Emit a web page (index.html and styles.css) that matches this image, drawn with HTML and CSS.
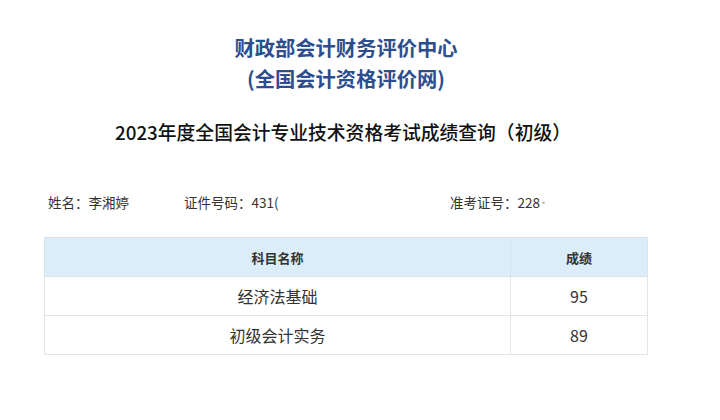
FILE: index.html
```html
<!DOCTYPE html>
<html lang="zh-CN">
<head>
<meta charset="utf-8">
<title>成绩查询</title>
<link rel="stylesheet" href="styles.css">
</head>
<body>
<div class="page">
  <div class="org">
    <div class="org-line">财政部会计财务评价中心</div>
    <div class="org-line">(全国会计资格评价网)</div>
  </div>
  <h1 class="title">2023年度全国会计专业技术资格考试成绩查询（初级）</h1>
  <div class="info">
    <span class="info-item name">姓名：李湘婷</span>
    <span class="info-item idno">证件号码：431(</span>
    <span class="info-item exam">准考证号：228<span class="cut">˙</span></span>
  </div>
  <table class="scores">
    <thead>
      <tr><th class="col-subject">科目名称</th><th class="col-score">成绩</th></tr>
    </thead>
    <tbody>
      <tr><td>经济法基础</td><td>95</td></tr>
      <tr><td>初级会计实务</td><td>89</td></tr>
    </tbody>
  </table>
</div>
</body>
</html>
```
FILE: styles.css
```css
html, body {
  margin: 0;
  padding: 0;
  background: #ffffff;
}
body {
  font-family: "Noto Sans CJK SC", "Noto Sans", sans-serif;
  color: #222;
}
.page {
  width: 720px;
  height: 420px;
  display: flex;
  flex-direction: column;
}
.org {
  padding-top: 32px;
  padding-right: 28px;
  text-align: center;
  color: #2d4e8e;
  font-weight: 700;
  font-size: 20.3px;
}
.org-line {
  line-height: 31px;
}
.title {
  margin: 24px 34px 0 0;
  text-align: center;
  font-size: 18.8px;
  line-height: 28px;
  font-weight: 500;
  color: #111;
}
.info {
  margin-top: 46px;
  display: flex;
  font-size: 13.5px;
  line-height: 20px;
  color: #333;
}
.name { margin-left: 48px; width: 136px; }
.idno { width: 266px; }
.cut { color: #bbb; }
.scores {
  margin: 25px 0 0 44px;
  width: 604px;
  border-collapse: collapse;
  border: 1px solid #e0e6ec;
}
.scores th {
  background: #daedf8;
  height: 38px;
  padding: 0;
  font-size: 13px;
  font-weight: 700;
  color: #333;
  border: 1px solid #d8e4ec;
}
.col-subject { width: 465px; }
.scores td {
  height: 38px;
  padding: 0;
  text-align: center;
  font-size: 16px;
  color: #333;
  border: 1px solid #e2e6ea;
}
```
